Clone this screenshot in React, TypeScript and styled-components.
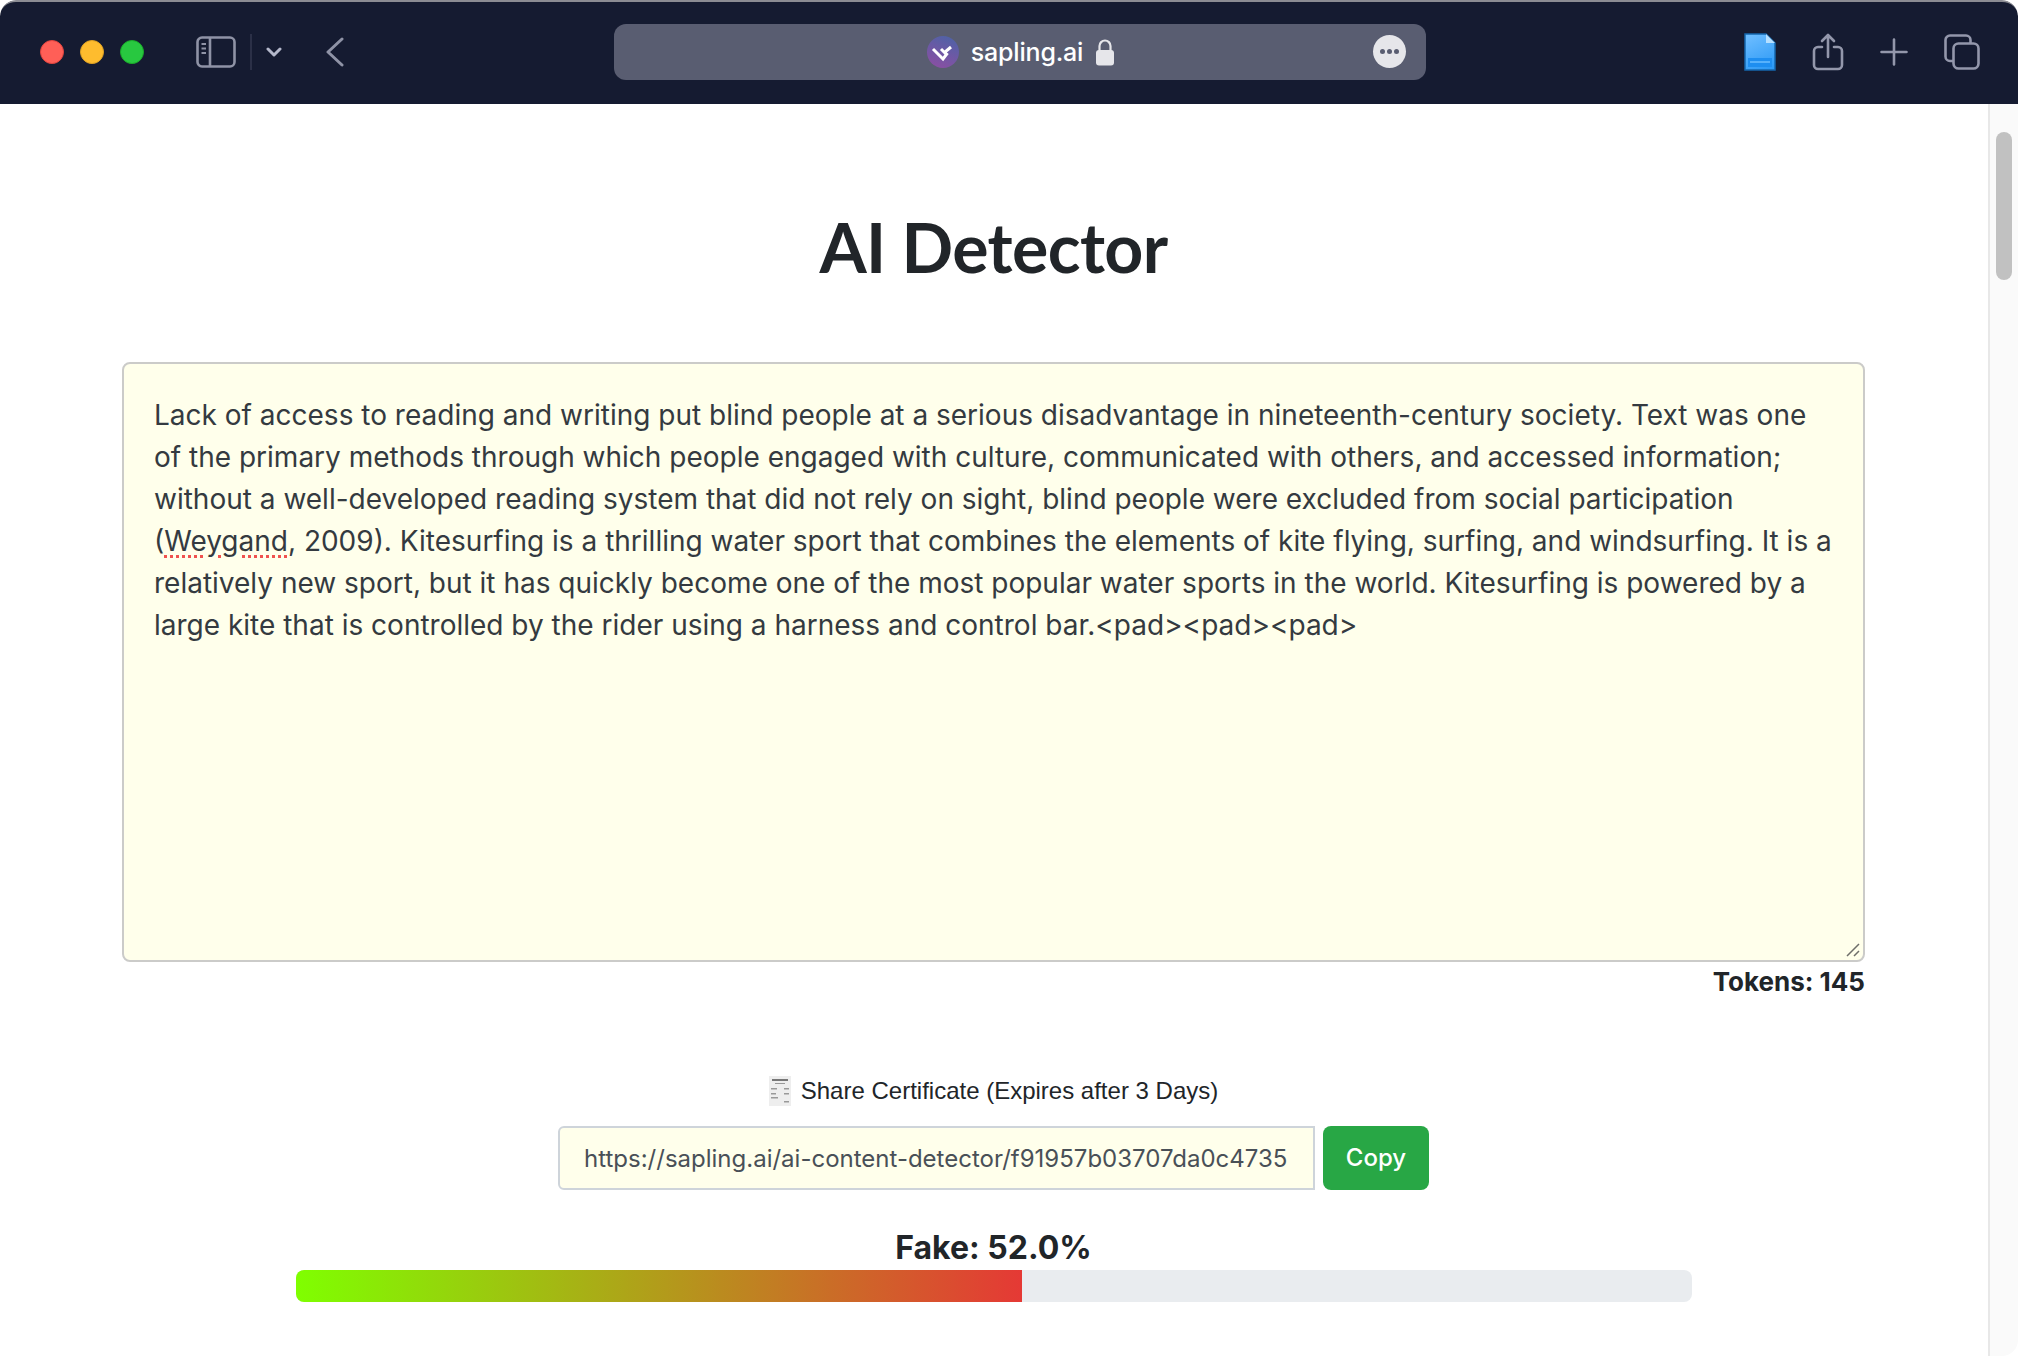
import React from "react";
import styled, { createGlobalStyle } from "styled-components";

const GlobalStyle = createGlobalStyle`
  html, body {
    margin: 0;
    padding: 0;
    height: 1356px;
    overflow: hidden;
    background: #fff;
  }
  * {
    box-sizing: border-box;
  }
`;

const Window = styled.div`
  width: 2018px;
  height: 1356px;
  display: flex;
  flex-direction: column;
  border-radius: 16px;
  overflow: hidden;
  font-family: Inter, "Liberation Sans", sans-serif;
  color: #212529;
`;

const Toolbar = styled.header`
  height: 104px;
  flex: none;
  background: #151b31;
  border-top: 2px solid #8b8c93;
  border-radius: 16px 16px 0 0;
  display: flex;
  align-items: center;
  padding-bottom: 2px;
`;

const Lights = styled.div`
  display: flex;
  gap: 16px;
  margin-left: 40px;
`;

const Light = styled.span<{ $color: string; $edge: string }>`
  width: 24px;
  height: 24px;
  border-radius: 50%;
  background: ${(p) => p.$color};
  border: 1px solid ${(p) => p.$edge};
`;

const LeftTools = styled.div`
  display: flex;
  align-items: center;
  margin-left: 52px;
  width: 418px;
  color: #8f93a6;
`;

const ToolDivider = styled.span`
  width: 2px;
  height: 36px;
  background: #2b3047;
  margin: 0 14px;
`;

const BackIcon = styled.svg`
  margin-left: 44px;
`;

const AddressBar = styled.div`
  width: 812px;
  height: 56px;
  background: #595d71;
  border-radius: 12px;
  position: relative;
  display: flex;
  align-items: center;
  justify-content: center;
  gap: 12px;
  padding-left: 2px;
  color: #fff;
  font-size: 25px;
  font-weight: 500;
`;

const Domain = styled.span`
  line-height: 1;
  letter-spacing: -0.2px;
`;

const MoreButton = styled.span`
  position: absolute;
  right: 20px;
  top: 11px;
  width: 33px;
  height: 33px;
  border-radius: 50%;
  background: #e6e6ea;
  display: flex;
  align-items: center;
  justify-content: center;
  gap: 2px;
`;

const MoreDot = styled.i`
  width: 5px;
  height: 5px;
  border-radius: 50%;
  background: #595d71;
`;

const RightTools = styled.div`
  flex: 1;
  display: flex;
  align-items: center;
  justify-content: flex-end;
  gap: 36px;
  padding-right: 38px;
  color: #9397ab;
`;

const Body = styled.div`
  flex: 1;
  display: flex;
  min-height: 0;
`;

const Main = styled.main`
  flex: 1;
  padding: 0 123px 0 122px;
  background: #fff;
`;

const Title = styled.h1`
  margin: 0;
  padding-top: 98px;
  height: 258px;
  text-align: center;
  font-family: Lato, sans-serif;
  font-size: 68px;
  font-weight: 700;
  line-height: 90px;
  letter-spacing: -0.6px;
  color: #212529;
`;

const TextBox = styled.div`
  position: relative;
  height: 600px;
  padding: 30px 28px 0 30px;
  background: #ffffeb;
  border: 2px solid #cbcbc9;
  border-radius: 8px;
  font-size: 28px;
  line-height: 42px;
  color: #343a40;
`;

const Misspelt = styled.span`
  text-decoration: underline dotted #f0524f 3px;
  text-underline-offset: 4px;
`;

const Resizer = styled.svg`
  position: absolute;
  right: 2px;
  bottom: 2px;
`;

const Tokens = styled.div`
  text-align: right;
  font-size: 26px;
  font-weight: 700;
  line-height: 40px;
  color: #212529;
`;

const ShareLabel = styled.div`
  margin-top: 64px;
  height: 50px;
  display: flex;
  align-items: center;
  justify-content: center;
  gap: 10px;
  font-family: "Liberation Sans", Arial, sans-serif;
  font-size: 24px;
  color: #212529;
`;

const ShareRow = styled.div`
  margin-top: 10px;
  display: flex;
  justify-content: center;
  gap: 8px;
  padding-right: 0;
`;

const LinkField = styled.div`
  width: 757px;
  height: 64px;
  display: flex;
  align-items: center;
  padding-left: 24px;
  background: #ffffeb;
  border: 2px solid #ced4da;
  border-radius: 6px 0 0 6px;
  font-size: 24px;
  color: #495057;
  white-space: nowrap;
`;

const CopyButton = styled.button`
  width: 106px;
  height: 64px;
  border: 0;
  border-radius: 8px;
  background: #28a745;
  color: #fff;
  font-family: Inter, sans-serif;
  font-size: 24px;
  font-weight: 500;
  padding: 0 0 2px;
`;

const ScoreLabel = styled.div`
  margin-top: 36px;
  height: 44px;
  text-align: center;
  font-size: 32px;
  font-weight: 700;
  line-height: 44px;
  color: #212529;
`;

const Progress = styled.div`
  margin: 0 173px 0 174px;
  height: 32px;
  background: #e9ecef;
  border-radius: 8px;
  overflow: hidden;
`;

const ProgressFill = styled.div`
  height: 100%;
  background: linear-gradient(90deg, #7fff00, #e53935);
`;

const ScrollTrack = styled.aside`
  width: 30px;
  flex: none;
  background: #fafafa;
  border-left: 2px solid #e8e8e8;
  padding: 28px 6px 0 6px;
`;

const ScrollThumb = styled.div`
  width: 16px;
  height: 148px;
  border-radius: 8px;
  background: #c1c1c1;
`;

const fakeScore = 52;

export default function App() {
  return (
    <Window>
      <GlobalStyle />
      <Toolbar>
        <Lights>
          <Light $color="#ff5f57" $edge="#e0443e" />
          <Light $color="#febc2e" $edge="#dea123" />
          <Light $color="#28c840" $edge="#1aab29" />
        </Lights>
        <LeftTools>
          <svg width="40" height="32" viewBox="0 0 40 32" fill="none" stroke="currentColor" strokeWidth="2.6">
            <rect x="1.5" y="1.5" width="37" height="29" rx="4.5" />
            <path d="M14 1.5v29" />
            <path d="M5.5 8h4.5M5.5 12.5h4.5M5.5 17h4.5" strokeWidth="2" />
          </svg>
          <ToolDivider />
          <svg width="16" height="10" viewBox="0 0 16 10" fill="none" stroke="#b4b8cb" strokeWidth="3" strokeLinecap="round" strokeLinejoin="round">
            <path d="M2 2l6 6 6-6" />
          </svg>
          <BackIcon width="18" height="30" viewBox="0 0 18 30" fill="none" stroke="currentColor" strokeWidth="3" strokeLinecap="round" strokeLinejoin="round">
            <path d="M16 2L2 15l14 13" />
          </BackIcon>
        </LeftTools>
        <AddressBar>
          <svg width="32" height="32" viewBox="0 0 32 32">
            <defs>
              <linearGradient id="fav" x1="0.7" y1="0" x2="0.3" y2="1">
                <stop offset="0" stopColor="#4f62a6" />
                <stop offset="1" stopColor="#8a4fa3" />
              </linearGradient>
            </defs>
            <circle cx="16" cy="16" r="16" fill="url(#fav)" />
            <path d="M6 13l10 10 4.5-6M14 13l3.5 3.5L24 11" fill="none" stroke="#fff" strokeWidth="3" />
          </svg>
          <Domain>sapling.ai</Domain>
          <svg width="20" height="28" viewBox="0 0 20 28">
            <path d="M4.5 13V8a5.500 5.500 0 0 1 11 0v5" fill="none" stroke="#e6e6ea" strokeWidth="2.2" />
            <rect x="1" y="12" width="18" height="15.500" rx="3" fill="#e6e6ea" />
          </svg>
          <MoreButton>
            <MoreDot />
            <MoreDot />
            <MoreDot />
          </MoreButton>
        </AddressBar>
        <RightTools>
          <svg width="32" height="38" viewBox="0 0 32 38">
            <defs>
              <linearGradient id="doc" x1="0.3" y1="0" x2="0.7" y2="1">
                <stop offset="0" stopColor="#6bbcff" />
                <stop offset="1" stopColor="#2e9af5" />
              </linearGradient>
            </defs>
            <path d="M1 1h21l9 9v27H1z" fill="url(#doc)" stroke="#1467ad" strokeWidth="1.500" />
            <path d="M22 1v9h9z" fill="#b7e0ff" />
            <rect x="4" y="25" width="24" height="9" fill="#1e8ef0" />
            <path d="M6 29h20" stroke="#6bbcff" strokeWidth="1.500" />
          </svg>
          <svg width="32" height="38" viewBox="0 0 32 38" fill="none" stroke="currentColor" strokeWidth="2.6" strokeLinecap="round" strokeLinejoin="round">
            <path d="M10 14H6a4 4 0 0 0-4 4v14a4 4 0 0 0 4 4h20a4 4 0 0 0 4-4V18a4 4 0 0 0-4-4h-4" />
            <path d="M16 24V2M10 8l6-6 6 6" />
          </svg>
          <svg width="28" height="28" viewBox="0 0 28 28" fill="none" stroke="currentColor" strokeWidth="2.6" strokeLinecap="round">
            <path d="M14 1.500v25M1.500 14h25" />
          </svg>
          <svg width="36" height="36" viewBox="0 0 36 36" fill="none" stroke="currentColor" strokeWidth="2.6">
            <rect x="9.500" y="9.500" width="25" height="25" rx="5" />
            <path d="M9 27H6a4.500 4.500 0 0 1-4.500-4.500V6A4.500 4.500 0 0 1 6 1.500h16A4.500 4.500 0 0 1 26.500 6v3.500" />
          </svg>
        </RightTools>
      </Toolbar>
      <Body>
        <Main>
          <Title>AI Detector</Title>
          <TextBox>
            Lack of access to reading and writing put blind people at a serious disadvantage in
            nineteenth-century society. Text was one of the primary methods through which people
            engaged with culture, communicated with others, and accessed information; without a
            well-developed reading system that did not rely on sight, blind people were excluded
            from social participation (<Misspelt>Weygand</Misspelt>, 2009). Kitesurfing is a
            thrilling water sport that combines the elements of kite flying, surfing, and
            windsurfing. It is a relatively new sport, but it has quickly become one of the most
            popular water sports in the world. Kitesurfing is powered by a large kite that is
            controlled by the rider using a harness and control bar.&lt;pad&gt;&lt;pad&gt;&lt;pad&gt;
            <Resizer width="16" height="16" viewBox="0 0 16 16" fill="none" stroke="#6e6e6a" strokeWidth="1.500">
              <path d="M2 14L14 2M9 14l5-5" />
            </Resizer>
          </TextBox>
          <Tokens>Tokens: 145</Tokens>
          <ShareLabel>
            <svg width="22" height="30" viewBox="0 0 22 30">
              <rect width="22" height="30" fill="#eeeeee" />
              <path d="M3 3h16v2H3z" fill="#777" />
              <path d="M6 7h10v1H6zM2 12h6v1.500H2zM15 12h5v1.500h-5zM2 17h5v1.500H2zM15 17h5v1.500h-5zM2 21h7v1.500H2zM15 25h5v1.500h-5z" fill="#999" />
            </svg>
            Share Certificate (Expires after 3 Days)
          </ShareLabel>
          <ShareRow>
            <LinkField>https://sapling.ai/ai-content-detector/f91957b03707da0c4735</LinkField>
            <CopyButton>Copy</CopyButton>
          </ShareRow>
          <ScoreLabel>Fake: {fakeScore.toFixed(1)}%</ScoreLabel>
          <Progress>
            <ProgressFill style={{ width: `${fakeScore}%` }} />
          </Progress>
        </Main>
        <ScrollTrack>
          <ScrollThumb />
        </ScrollTrack>
      </Body>
    </Window>
  );
}
